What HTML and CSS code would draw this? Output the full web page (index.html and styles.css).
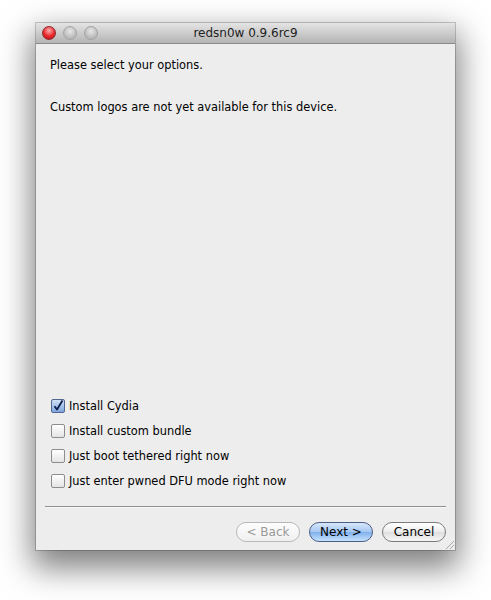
FILE: index.html
```html
<!DOCTYPE html>
<html lang="en">
  <head>
    <meta charset="UTF-8" />
    <title>redsn0w 0.9.6rc9</title>
    <link rel="stylesheet" href="styles.css">
  </head>
  <body>
    <div class="window">
      <!-- Title bar -->
      <div class="titlebar">
        <div class="lights">
          <span class="light close"></span>
          <span class="light"></span>
          <span class="light"></span>
        </div>
        <div class="title">redsn0w 0.9.6rc9</div>
      </div>

      <!-- Content -->
      <div class="content">
        <p class="intro">Please select your options.</p>
        <p class="note">Custom logos are not yet available for this device.</p>

        <div class="options">
          <label class="option"><span class="box checked"><svg viewBox="0 0 12 12" width="12" height="12"><path d="M2.5 6.2 L5 9.5 L10.5 0.5" fill="none" stroke="#0d1d4a" stroke-width="1.8" stroke-linejoin="round"/></svg></span>Install Cydia</label>
          <label class="option"><span class="box"></span>Install custom bundle</label>
          <label class="option"><span class="box"></span>Just boot tethered right now</label>
          <label class="option"><span class="box"></span>Just enter pwned DFU mode right now</label>
        </div>

        <hr class="sep" />

        <div class="buttons">
          <button class="btn disabled">&lt; Back</button>
          <button class="btn primary">Next &gt;</button>
          <button class="btn">Cancel</button>
        </div>
      </div>
      <div class="grip"></div>
    </div>
  </body>
</html>
```

FILE: styles.css
```css
body {
  margin: 0;
  padding: 23px 0 50px 36px;
  background: #fff;
  font-family: "DejaVu Sans", "Liberation Sans", sans-serif;
  font-size: 11.4px;
  color: #000;
}
.window {
  position: relative;
  width: 419px;
  height: 527px;
  background: #ededed;
  display: flex;
  flex-direction: column;
  box-shadow: 0 14px 30px 4px rgba(0, 0, 0, 0.5), 0 0 0 1px rgba(0, 0, 0, 0.2);
}
/* Title Bar */
.titlebar {
  height: 20px;
  display: flex;
  align-items: center;
  position: relative;
  background: linear-gradient(#e4e4e4, #b4b4b4);
  border-bottom: 1px solid #8a8a8a;
}
.lights {
  display: flex;
  gap: 7px;
  padding-left: 6px;
}
.light {
  width: 12px;
  height: 12px;
  border-radius: 50%;
  background: radial-gradient(circle at 50% 35%, #e8e8e8, #b8b8b8 70%);
  border: 1px solid #a4a4a4;
}
.light.close {
  background: radial-gradient(circle at 50% 30%, #ffb0b0, #e8262b 55%, #a9161a);
  border-color: #8e2a2c;
}
.title {
  position: absolute;
  left: 0;
  right: 0;
  text-align: center;
  font-size: 12px;
  color: #222;
}
/* Content */
.content {
  flex: 1;
  display: flex;
  flex-direction: column;
  padding: 0 9px 0 9px;
}
.intro {
  margin: 14px 0 0 5px;
}
.note {
  margin: 28px 0 0 5px;
}
.options {
  margin-top: auto;
  display: flex;
  flex-direction: column;
  gap: 10px;
  padding-left: 6px;
}
.option {
  display: flex;
  align-items: center;
  gap: 4px;
  height: 15px;
}
.box {
  width: 12px;
  height: 12px;
  border: 1px solid #8d8d8d;
  border-radius: 2px;
  background: linear-gradient(#ffffff, #e4e4e4);
  display: flex;
  align-items: center;
  justify-content: center;
}
.box.checked {
  border-color: #52678d;
  background: linear-gradient(#cfe0f6, #7fa6de);
}
.sep {
  margin: 18px 0 0 0;
  border: 0;
  border-top: 1px solid #8f8f8f;
  border-bottom: 1px solid #f8f8f8;
}
.buttons {
  display: flex;
  justify-content: flex-end;
  gap: 9px;
  margin-top: 14px;
  height: 28px;
}
.btn {
  height: 20px;
  width: 64px;
  padding: 0;
  border-radius: 10px;
  border: 1px solid #7a7a7a;
  background: linear-gradient(#ffffff, #ececec 50%, #dedede 51%, #f6f6f6);
  font-family: inherit;
  font-size: 12px;
  color: #000;
}
.btn.disabled {
  color: #9a9a9a;
  border-color: #b8b8b8;
  background: linear-gradient(#fdfdfd, #f0f0f0);
}
.btn.primary {
  border-color: #4b5e86;
  background: linear-gradient(#d7e7fb, #a3c6f1 50%, #80b0ec 51%, #c7e2fd);
}
.grip {
  position: absolute;
  right: 1px;
  bottom: 1px;
  width: 10px;
  height: 10px;
  background: repeating-linear-gradient(135deg, transparent 0 2px, #a8a8a8 2px 3px);
  clip-path: polygon(100% 0, 100% 100%, 0 100%);
}
```
